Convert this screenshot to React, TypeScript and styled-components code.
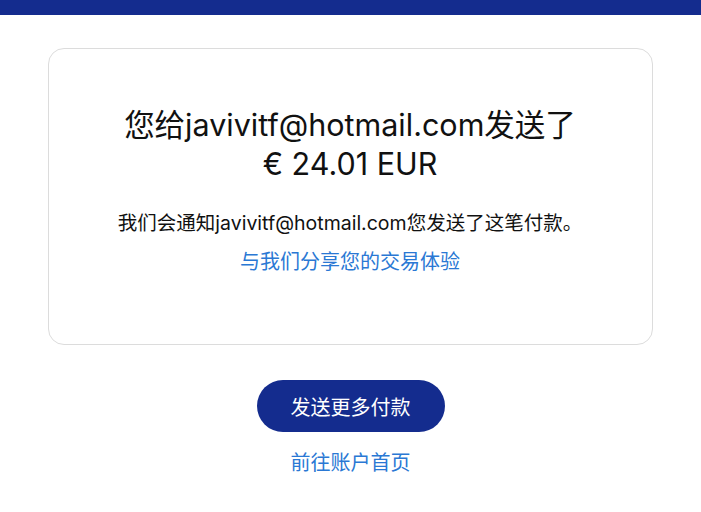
import React from "react";
import styled, { createGlobalStyle } from "styled-components";

const Global = createGlobalStyle`
  html, body { margin: 0; padding: 0; background: #ffffff; }
  body { font-family: Inter, "Noto Sans CJK SC", sans-serif; color: #111; }
`;

const TopBar = styled.div`
  height: 15px;
  background: #142c8e;
`;

const Main = styled.main`
  display: flex;
  flex-direction: column;
  align-items: center;
  padding-top: 33px;
`;

const Card = styled.section`
  box-sizing: border-box;
  width: 605px;
  height: 297px;
  margin-left: -1px;
  border: 1px solid #dcdcdc;
  border-radius: 16px;
  display: flex;
  flex-direction: column;
  align-items: center;
  padding-top: 56px;
`;

const Title = styled.h1`
  margin: 0;
  font-size: 30.5px;
  font-weight: 400;
  line-height: 39px;
  text-align: center;
  color: #111;
`;

const Body = styled.p`
  margin: 28px 0 0;
  font-size: 19.5px;
  line-height: 24px;
  text-align: center;
  color: #111;
`;

const Link = styled.a<{ $top: number }>`
  display: block;
  margin-top: ${(p) => p.$top}px;
  font-size: 20px;
  line-height: 26px;
  color: #2a78d4;
  text-decoration: none;
  text-align: center;
`;

const Button = styled.button`
  margin-top: 35px;
  width: 188px;
  height: 52px;
  border: none;
  border-radius: 26px;
  background: #142c8e;
  color: #fff;
  font-family: Inter, "Noto Sans CJK SC", sans-serif;
  font-size: 20px;
`;

export default function App() {
  return (
    <>
      <Global />
      <TopBar />
      <Main>
        <Card>
          <Title>
            您给javivitf@hotmail.com发送了
            <br />€ 24.01 EUR
          </Title>
          <Body>我们会通知javivitf@hotmail.com您发送了这笔付款。</Body>
          <Link $top={14} href="#">与我们分享您的交易体验</Link>
        </Card>
        <Button>发送更多付款</Button>
        <Link $top={18} href="#">前往账户首页</Link>
      </Main>
    </>
  );
}
